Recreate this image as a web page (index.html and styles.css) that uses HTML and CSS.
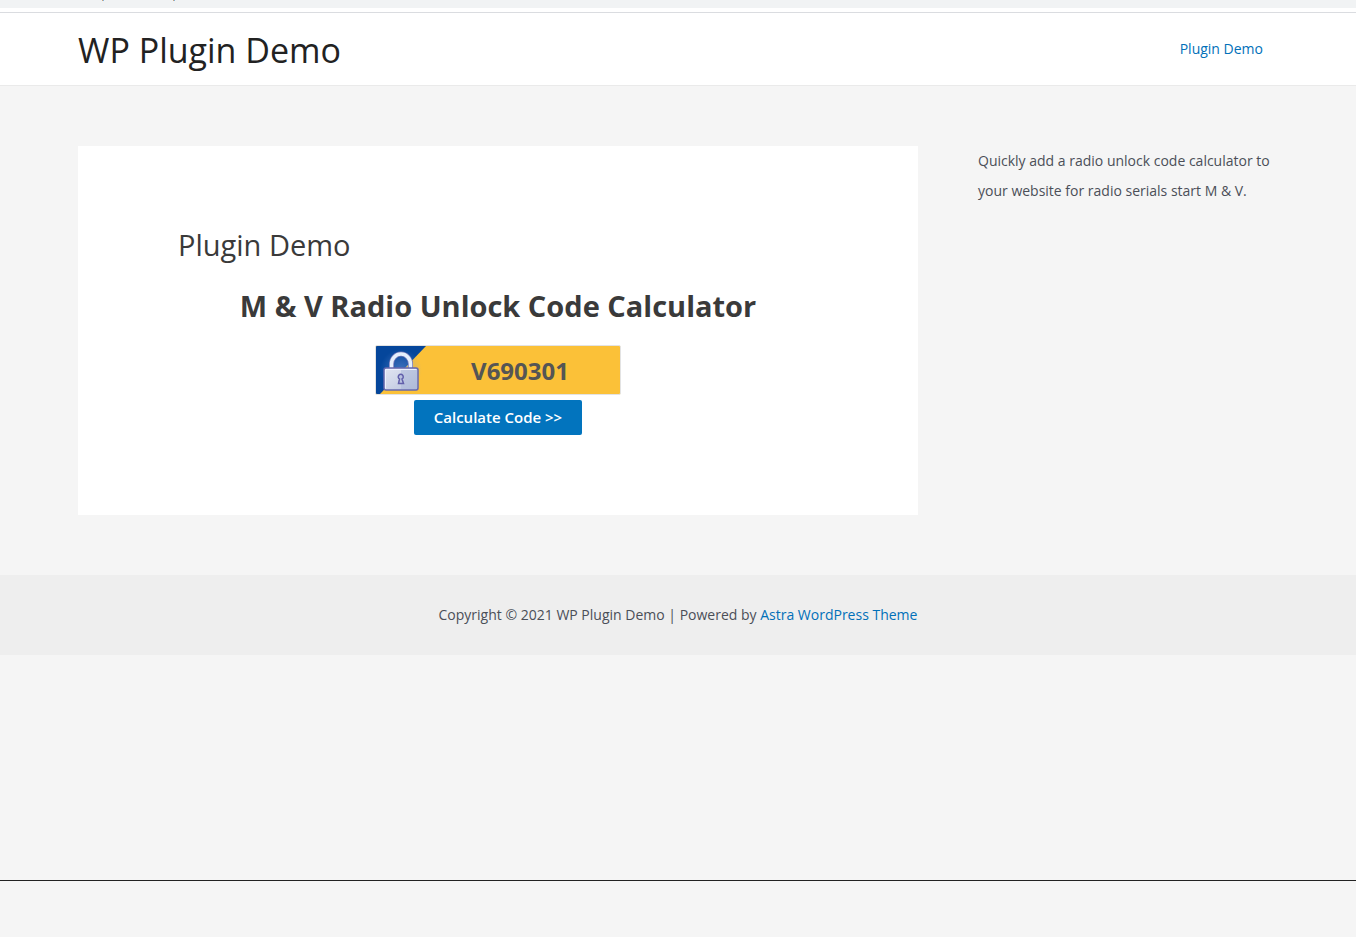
FILE: index.html
```html
<!DOCTYPE html>
<html lang="en">
<head>
<meta charset="utf-8">
<meta name="viewport" content="width=device-width, initial-scale=1">
<title>WP Plugin Demo</title>
<link rel="stylesheet" href="styles.css">
</head>
<body>
<div class="topbar"><svg class="topbar-marks" width="240" height="1" aria-hidden="true"><path d="M102 0h1M173 0h1" stroke="#d0a37a" stroke-width="2"/><path d="M103 0h1M174 0h1" stroke="#7db2dc" stroke-width="2"/></svg></div>
<header class="site-header">
  <div class="container header-row">
    <a class="site-title" href="#">WP Plugin Demo</a>
    <nav class="site-nav"><a href="#">Plugin Demo</a></nav>
  </div>
</header>
<div class="container content-row">
  <main class="card">
    <h1 class="entry-title">Plugin Demo</h1>
    <form class="calculator">
      <h2 class="calc-title">M &amp; V Radio Unlock Code Calculator</h2>
      <div class="serial">
        <svg class="serial-flag" width="50" height="48" viewBox="0 0 50 48" aria-hidden="true">
          <defs>
            <linearGradient id="body" x1="0" x2="1" y1="0" y2="1"><stop offset="0" stop-color="#e2e5f2"/><stop offset=".5" stop-color="#ced5e8"/><stop offset="1" stop-color="#b4bfda"/></linearGradient>
            <radialGradient id="glow"><stop offset="0" stop-color="#7aa0e0" stop-opacity=".5"/><stop offset="1" stop-color="#7aa0e0" stop-opacity="0"/></radialGradient>
          </defs>
          <path d="M0 0h50L4 48H0z" fill="#05469b"/>
          <ellipse cx="25" cy="24" rx="21" ry="21" fill="url(#glow)"/>
          <path d="M15.500 22v-4a9.500 10 0 0 1 19 0v4" fill="none" stroke="#7378b8" stroke-width="5"/>
          <path d="M15.500 22v-4a9.500 10 0 0 1 19 0v4" fill="none" stroke="#e4effc" stroke-width="3.500"/>
          <rect x="8" y="22" width="34" height="22" rx="2" fill="url(#body)" stroke="#6668ad" stroke-width="1.500"/>
          <path d="M25 23h16v20H25z" fill="#a8b5d8" opacity=".5"/>
          <path d="M9.500 42.500V23.500h31" fill="none" stroke="#edf2ff"/>
          <path d="M23.500 33a2.500 2.500 0 1 1 2.500 0l1.500 4.500h-5z" fill="#b8c1df" stroke="#615faa" stroke-width="1.500"/>
        </svg>
        <input class="serial-input" type="text" value="V690301" aria-label="Radio serial number">
      </div>
      <button class="calc-button" type="button">Calculate Code &gt;&gt;</button>
    </form>
  </main>
  <aside class="sidebar"><p>Quickly add a radio unlock code calculator to your website for radio serials start M &amp; V.</p></aside>
</div>
<footer class="site-footer">
  <p>Copyright © 2021 WP Plugin Demo | Powered by <a href="#">Astra WordPress Theme</a></p>
</footer>
<hr class="page-end">
</body>
</html>
```
FILE: styles.css
```css
* { box-sizing: border-box; }
body {
  margin: 0;
  min-height: 100vh;
  display: flex;
  flex-direction: column;
  background: #f5f5f5;
  color: #4b4f58;
  font: 14px/30px "Segoe UI", "Open Sans", "Noto Sans", sans-serif;
}
a { color: #0170b9; text-decoration: none; }
h1, h2, p { margin: 0; }
.topbar { height: 8px; background: #f1f3f4; box-shadow: 0 4px 0 #fff; }
.topbar-marks { display: block; }
.site-header {
  margin-top: 4px;
  border-top: 1px solid #dadce0;
  border-bottom: 1px solid #eaeaea;
  background: #fff;
}
.container { width: 100%; max-width: 1240px; margin: 0 auto; padding: 0 20px; }
.header-row { display: flex; justify-content: space-between; align-items: center; height: 72px; }
.site-title { padding-top: 2px; color: #222; font-size: 34px; line-height: 44px; }
.site-nav { padding-right: 15px; }
.content-row { display: flex; gap: 60px; padding-top: 60px; padding-bottom: 60px; }
.card { flex: 1; background: #fff; padding: 80px 100px; }
.sidebar { flex: 0 0 300px; }
.entry-title { color: #3a3a3a; font-size: 29px; font-weight: 400; line-height: 38px; }
.calculator { display: flex; flex-direction: column; align-items: center; }
.calc-title { margin-top: 22px; color: #3a3a3a; font-size: 29px; font-weight: 700; line-height: 40px; white-space: nowrap; }
.serial {
  display: flex;
  width: 246px;
  margin-top: 19px;
  border: 1px solid #e3e3e3;
  border-radius: 2px;
  background: #fbc138;
  overflow: hidden;
}
.serial-flag { flex: none; }
.serial-input {
  flex: 1;
  min-width: 0;
  height: 48px;
  border: 0;
  padding: 0 6px 0 0;
  background: transparent;
  color: #555;
  font: 700 24px/32px "Segoe UI", "Open Sans", "Noto Sans", sans-serif;
  text-align: center;
}
.calc-button {
  height: 35px;
  margin-top: 5px;
  padding: 0 20px 2px;
  border: 0;
  border-radius: 2px;
  background: #0274be;
  color: #fff;
  font: 600 15px/20px "Segoe UI", "Open Sans", "Noto Sans", sans-serif;
}
.site-footer { padding: 25px 20px; background: #eee; text-align: center; }
.page-end { width: 100%; margin: auto 0 56px; border: 0; border-top: 1px solid #222; }
```
